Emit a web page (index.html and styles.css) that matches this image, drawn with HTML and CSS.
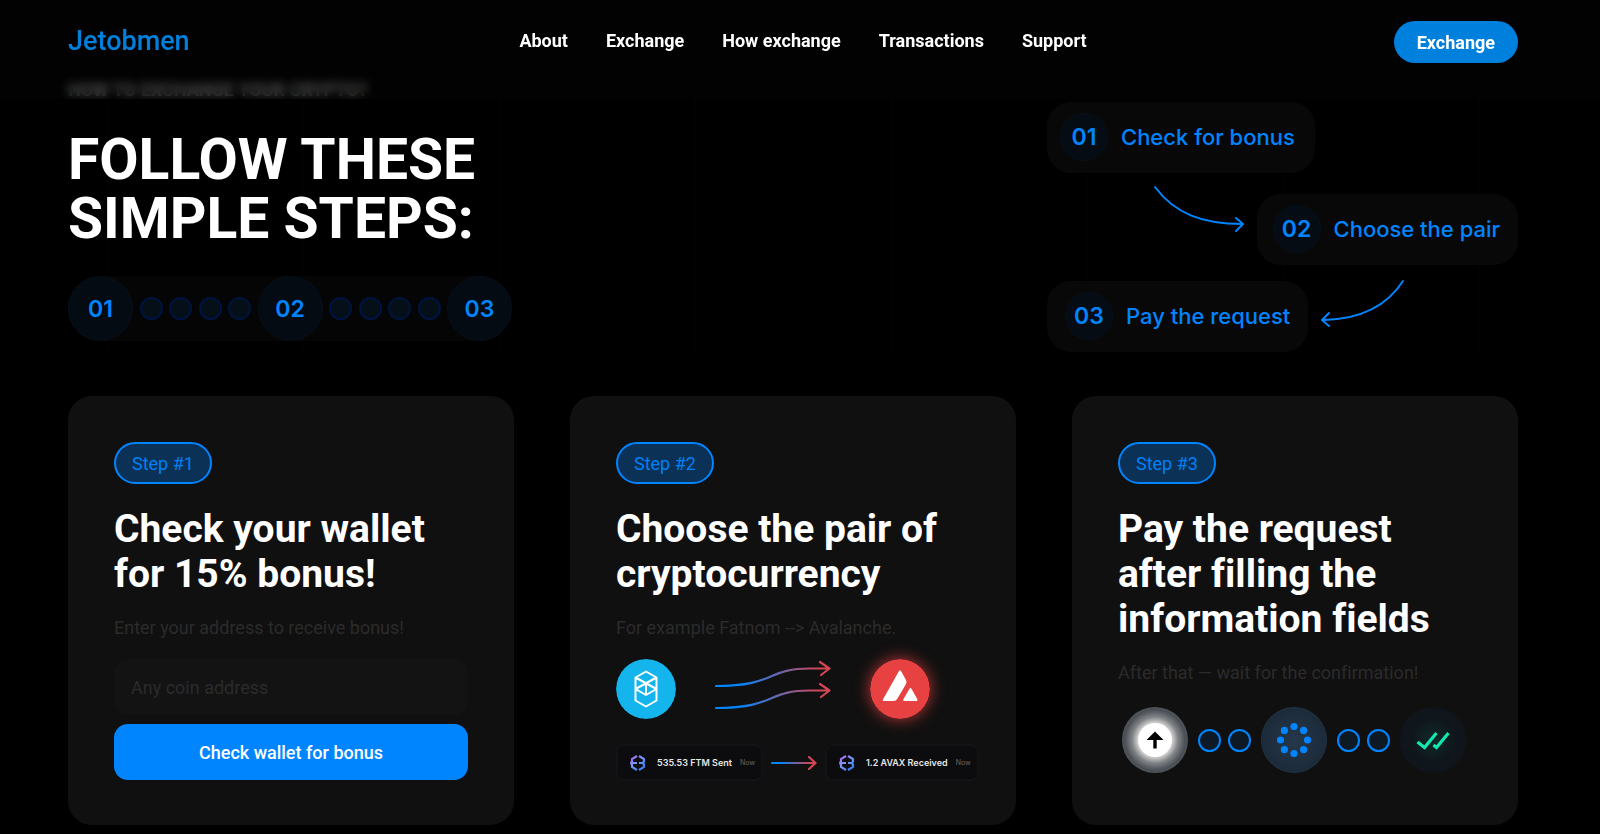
FILE: index.html
```html
<!DOCTYPE html>
<html lang="en">
<head>
    <meta charset="UTF-8">
    <meta name="viewport" content="width=device-width, initial-scale=1.0">
    <title>Jetobmen</title>
    <link rel="stylesheet" href="styles.css">
</head>
<body>
    <header class="header">
        <div class="container header-inner">
            <a href="#" class="logo">Jetobmen</a>
            <nav class="nav">
                <a href="#about">About</a>
                <a href="#exchange">Exchange</a>
                <a href="#how">How exchange</a>
                <a href="#transactions">Transactions</a>
                <a href="#support">Support</a>
            </nav>
            <button type="button" class="header-button">Exchange</button>
        </div>
    </header>

    <main class="container how" id="how">
        <section class="intro">
            <div class="intro-text">
                <p class="eyebrow">How to exchange your crypto?</p>
                <h1>Follow these<br>simple steps:</h1>
                <div class="progress">
                    <span class="progress-step">01</span>
                    <span class="progress-dot"></span>
                    <span class="progress-dot"></span>
                    <span class="progress-dot"></span>
                    <span class="progress-dot"></span>
                    <span class="progress-step">02</span>
                    <span class="progress-dot"></span>
                    <span class="progress-dot"></span>
                    <span class="progress-dot"></span>
                    <span class="progress-dot"></span>
                    <span class="progress-step">03</span>
                </div>
            </div>

            <div class="flow">
                <div class="flow-item flow-first"><span class="flow-number">01</span>Check for bonus</div>
                <div class="flow-item flow-second"><span class="flow-number">02</span>Choose the pair</div>
                <div class="flow-item flow-third"><span class="flow-number">03</span>Pay the request</div>
                <svg class="flow-arrows" viewBox="0 0 471 249">
                    <path d="M108 85C128 112 156 122 195 122M189 116L196 122L189 129"/>
                    <path d="M356 179C340 204 314 217 277 218M282 211L275 218L282 224"/>
                </svg>
            </div>
        </section>

        <section class="cards">
            <!-- Step 1 -->
            <article class="card">
                <span class="badge">Step #1</span>
                <h2>Check your wallet for 15% bonus!</h2>
                <form class="wallet-form">
                    <label for="wallet">Enter your address to receive bonus!</label>
                    <input type="text" id="wallet" placeholder="Any coin address">
                    <button type="button" class="wallet-button">Check wallet for bonus</button>
                </form>
            </article>

            <!-- Step 2 -->
            <article class="card">
                <span class="badge">Step #2</span>
                <h2>Choose the pair of cryptocurrency</h2>
                <p>For example Fatnom --&gt; Avalanche.</p>
                <div class="pair">
                    <svg class="coin" viewBox="0 0 60 60">
                        <circle cx="30" cy="30" r="30" fill="#13b5ec"/>
                        <path d="M30 12.500L40.500 18.500V41.500L30 47.500L19.500 41.500V18.500ZM19.500 18.500L40.500 30L30 36L19.500 30L40.500 18.500M30 24.500V36" fill="none" stroke="#fff" stroke-width="2" stroke-linejoin="round"/>
                    </svg>
                    <svg class="pair-arrows" viewBox="0 0 116 50">
                        <defs>
                            <linearGradient id="fade" gradientUnits="userSpaceOnUse" x1="0" y1="0" x2="116" y2="0">
                                <stop offset="0.2" stop-color="#0085ff"/>
                                <stop offset="0.9" stop-color="#d24654"/>
                            </linearGradient>
                        </defs>
                        <g fill="none" stroke="url(#fade)" stroke-width="2.200" stroke-linecap="round" stroke-linejoin="round">
                            <path d="M1 27C61 27 51 9.500 95 9.500H114M105 3L114.500 9.500L106 16"/>
                            <path d="M1 49C61 49 51 31.500 95 31.500H114M105 25L114.500 31.500L106 38"/>
                        </g>
                    </svg>
                    <svg class="coin coin-avax" viewBox="0 0 60 60">
                        <circle cx="30" cy="30" r="30" fill="#e84142"/>
                        <path d="M29 12Q30 10.500 31 12L36 21Q37 23 36 25L27.500 39.500Q26 42 23.500 42H14Q12 42 13.200 40ZM39.500 29.700Q40.500 28.500 41.500 29.700L47.200 40Q48 42 46 42H34.500Q32.500 42 33.500 40Z" fill="#fff"/>
                    </svg>
                </div>
                <div class="notices">
                    <div class="notice">
                        <svg class="notice-icon" viewBox="0 0 16 16">
                            <defs>
                                <linearGradient id="mark" gradientUnits="userSpaceOnUse" x1="2" y1="2" x2="12" y2="14">
                                    <stop offset="0" stop-color="#a96bf0"/>
                                    <stop offset="0.5" stop-color="#6f9bf5"/>
                                    <stop offset="1" stop-color="#3d7bf0"/>
                                </linearGradient>
                            </defs>
                            <path d="M7 1L2 4V12L7 15M2 8H7M9 1L14 4V6.500L12.500 8L14 9.500V12L9 15M9 8H12.500M.5 6.500L2 8L.5 9.500" fill="none" stroke="url(#mark)" stroke-width="2.200"/>
                        </svg>
                        <span>535.53 FTM Sent</span>
                        <small>Now</small>
                    </div>
                    <svg class="notice-arrow" viewBox="0 0 46 14">
                        <defs>
                            <linearGradient id="short" gradientUnits="userSpaceOnUse" x1="0" y1="0" x2="46" y2="0">
                                <stop offset="0.2" stop-color="#0085ff"/>
                                <stop offset="0.85" stop-color="#d24654"/>
                            </linearGradient>
                        </defs>
                        <path d="M1 7H44M38 1L44.500 7L38 13" fill="none" stroke="url(#short)" stroke-width="2.200" stroke-linecap="round" stroke-linejoin="round"/>
                    </svg>
                    <div class="notice">
                        <svg class="notice-icon" viewBox="0 0 16 16">
                            <path d="M7 1L2 4V12L7 15M2 8H7M9 1L14 4V6.500L12.500 8L14 9.500V12L9 15M9 8H12.500M.5 6.500L2 8L.5 9.500" fill="none" stroke="url(#mark)" stroke-width="2.200"/>
                        </svg>
                        <span>1.2 AVAX Received</span>
                        <small>Now</small>
                    </div>
                </div>
            </article>

            <!-- Step 3 -->
            <article class="card">
                <span class="badge">Step #3</span>
                <h2>Pay the request after filling the information fields</h2>
                <p>After that — wait for the confirmation!</p>
                <div class="status">
                    <div class="status-circle status-sent">
                        <svg viewBox="0 0 66 66">
                            <circle cx="33" cy="33" r="17" fill="#fff"/>
                            <path d="M33 24.500L41.500 33H34.700V41.500H31.300V33H24.500Z" fill="#000"/>
                        </svg>
                    </div>
                    <div class="status-dots"><span></span><span></span></div>
                    <div class="status-circle status-wait">
                        <svg viewBox="0 0 66 66" fill="#0085ff">
                            <circle cx="33" cy="19.500" r="3.600"/>
                            <circle cx="42.600" cy="23.400" r="3.600"/>
                            <circle cx="46.500" cy="33" r="3.600"/>
                            <circle cx="42.600" cy="42.600" r="3.600"/>
                            <circle cx="33" cy="46.500" r="3.600"/>
                            <circle cx="23.400" cy="42.600" r="3.600"/>
                            <circle cx="19.500" cy="33" r="3.600"/>
                            <circle cx="23.400" cy="23.400" r="3.600"/>
                        </svg>
                    </div>
                    <div class="status-dots"><span></span><span></span></div>
                    <div class="status-circle status-done">
                        <svg viewBox="0 0 66 66">
                            <path d="M17.500 35L24.500 40.500L36.500 26M33.500 38L36.500 40.500L48.500 26" fill="none" stroke="#12e8b0" stroke-width="3.200"/>
                        </svg>
                    </div>
                </div>
            </article>
        </section>
    </main>
</body>
</html>
```

FILE: styles.css
```css
/* General styles */
* {
    box-sizing: border-box;
}

body {
    margin: 0;
    padding-right: 14px;
    background-color: #000000;
    color: #ffffff;
    font-family: Roboto, "Liberation Sans", sans-serif;
    font-size: 18px;
    font-variant-ligatures: none;
}

h1, h2, p {
    margin: 0;
}

a {
    text-decoration: none;
}

button, input {
    font-family: inherit;
    font-size: 18px;
    border: none;
}

button {
    cursor: pointer;
}

.container {
    max-width: 1450px;
    margin: 0 auto;
}

/* Header styles */
.header {
    position: fixed;
    top: 0;
    left: 0;
    right: 0;
    z-index: 10;
    height: 99px;
    padding-right: 14px;
    background-color: rgba(3, 3, 3, 0.7);
    backdrop-filter: blur(5px);
}

.header-inner {
    display: grid;
    grid-template-columns: 1fr auto 1fr;
    align-items: start;
    padding-top: 21px;
}

.logo {
    color: #0080dd;
    font-size: 27px;
    line-height: 40px;
    font-weight: 500;
}

.nav {
    display: flex;
    gap: 38px;
    margin-left: 20px;
    line-height: 40px;
}

.nav a {
    color: #ffffff;
    font-weight: 700;
}

.header-button {
    justify-self: end;
    height: 42px;
    padding: 0 23px;
    border-radius: 21px;
    background-color: #0080dd;
    color: #ffffff;
    font-weight: 700;
}

/* Intro styles */
.how {
    padding-top: 78px;
}

.intro {
    display: flex;
    justify-content: space-between;
    background-image: repeating-linear-gradient(90deg, transparent 0, transparent 39px, rgba(255, 255, 255, 0.01) 39px, rgba(255, 255, 255, 0.01) 40px, transparent 40px, transparent 196px);
}

.eyebrow {
    font-size: 18px;
    line-height: 24px;
    font-weight: 700;
    text-transform: uppercase;
    color: #ffffff;
}

h1 {
    margin: 28px 0;
    font-size: 57px;
    line-height: 59px;
    font-weight: 700;
    text-transform: uppercase;
}

.progress {
    display: flex;
    align-items: center;
    justify-content: space-between;
    width: 444px;
    border-radius: 33px;
    background-color: #050505;
}

.progress-step,
.flow-number {
    display: flex;
    align-items: center;
    justify-content: center;
    border: 1px solid #06101a;
    border-radius: 50%;
    background-color: #050b12;
    color: #0085ff;
    font-family: Inter, "Liberation Sans", sans-serif;
    font-size: 23px;
    font-weight: 600;
}

.progress-step {
    width: 65px;
    height: 65px;
}

.progress-dot {
    width: 23px;
    height: 23px;
    border: 2px solid #001340;
    border-radius: 50%;
    background-color: #040f18;
}

/* Flow diagram styles */
.flow {
    position: relative;
    display: flex;
    flex-direction: column;
    align-items: flex-start;
    width: 471px;
    margin-top: 24px;
}

.flow-item {
    display: flex;
    align-items: center;
    gap: 13px;
    height: 71px;
    padding: 0 18px 2px;
    border-radius: 24px;
    background-color: #080808;
    color: #0085ff;
    font-family: Inter, "Liberation Sans", sans-serif;
    font-size: 22px;
    font-weight: 500;
}

.flow-first {
    padding-left: 13px;
    padding-right: 20px;
}

.flow-second {
    align-self: flex-end;
    margin: 21px 0 16px;
    padding-left: 16px;
}

.flow-number {
    width: 48px;
    height: 48px;
    background-color: #060c14;
}

.flow-arrows {
    position: absolute;
    top: 0;
    left: 0;
    width: 471px;
    height: 249px;
    fill: none;
    stroke: #0085ff;
    stroke-width: 2;
    stroke-linecap: round;
    stroke-linejoin: round;
}

/* Card styles */
.cards {
    display: grid;
    grid-template-columns: repeat(3, minmax(0, 1fr));
    gap: 56px;
    margin-top: 44px;
}

.card {
    padding: 46px 46px 44px;
    border-radius: 24px;
    background-color: #101010;
}

.badge {
    display: flex;
    align-items: center;
    width: fit-content;
    height: 42px;
    padding: 0 16px;
    border: 2px solid #0085ff;
    border-radius: 21px;
    background-color: #0b3156;
    color: #0080f5;
}

.card h2 {
    margin: 23px 0 20px;
    font-size: 39px;
    line-height: 45px;
    font-weight: 700;
}

.card p,
.wallet-form label {
    line-height: 21px;
    color: #2b2b2b;
}

.wallet-form {
    display: flex;
    flex-direction: column;
}

.wallet-form input {
    height: 56px;
    margin: 21px 0 9px;
    padding: 0 17px;
    border-radius: 14px;
    background-color: #131313;
    color: #ffffff;
}

.wallet-form input::placeholder {
    color: #2b2b2b;
}

.wallet-button {
    height: 56px;
    border-radius: 14px;
    background-color: #0085ff;
    color: #ffffff;
    font-weight: 500;
}

/* Coin pair styles */
.pair {
    display: flex;
    justify-content: space-between;
    width: 314px;
    margin-top: 21px;
}

.coin {
    width: 60px;
    height: 60px;
    border-radius: 50%;
}

.coin-avax {
    box-shadow: 0 0 16px rgba(232, 65, 66, 0.8);
}

.pair-arrows {
    width: 116px;
    height: 50px;
}

.notices {
    display: flex;
    align-items: center;
    gap: 8px;
    margin-top: 25px;
    white-space: nowrap;
    font-family: Inter, "Liberation Sans", sans-serif;
}

.notice {
    display: flex;
    align-items: center;
    height: 37px;
    padding: 0 6px 0 12px;
    border: 2px solid #121217;
    border-radius: 8px;
    background-color: #0c0c0e;
    font-size: 9px;
    font-weight: 600;
    color: #e6e6e6;
}

.notice-icon {
    width: 16px;
    height: 16px;
    margin-right: 11px;
}

.notice small {
    margin-left: 8px;
    font-size: 7px;
    font-weight: 400;
    color: #666666;
}

.notice-arrow {
    flex: none;
    width: 46px;
    height: 14px;
}

/* Payment status styles */
.status {
    display: flex;
    align-items: center;
    justify-content: space-between;
    width: 344px;
    margin: 24px 0 0 4px;
}

.status-circle {
    width: 66px;
    height: 66px;
    border-radius: 50%;
}

.status-circle svg {
    display: block;
    width: 66px;
    height: 66px;
}

.status-sent {
    background: radial-gradient(circle closest-side, #d0d0d0 52%, #808386 70%, #4a4e55 92%, #50555c 100%);
}

.status-wait {
    border: 1px solid #213344;
    background: radial-gradient(circle closest-side, #25374a, #1c2b3a);
}

.status-wait svg {
    margin: -1px;
}

.status-done {
    background: radial-gradient(circle closest-side, #0f2b2a, #0f161c 65%, #0f151b);
}

.status-dots {
    display: flex;
    gap: 7px;
}

.status-dots span {
    width: 23px;
    height: 23px;
    border: 2px solid #0085ff;
    border-radius: 50%;
    background-color: #0d1a26;
}
```
